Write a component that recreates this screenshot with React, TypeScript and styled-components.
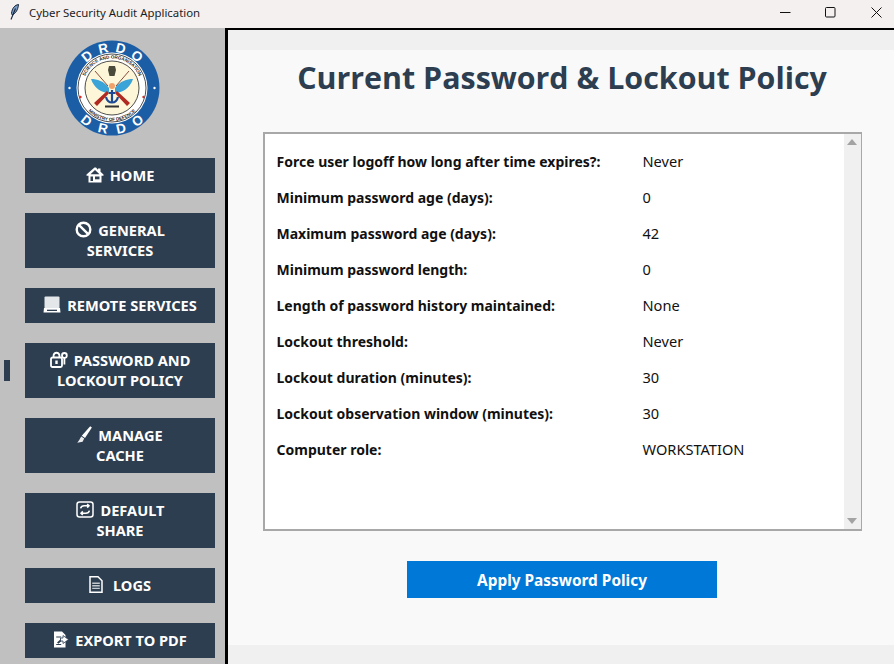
import React from "react";
import styled, { createGlobalStyle } from "styled-components";

const GlobalStyles = createGlobalStyle`
  html, body {
    margin: 0;
    padding: 0;
    height: 100%;
    background: #f0f0f0;
    font-family: "Noto Sans", "Open Sans", sans-serif;
  }
`;

const Window = styled.div`
  display: flex;
  flex-direction: column;
  width: 894px;
  height: 664px;
  overflow: hidden;
`;

const TitleBar = styled.div`
  display: flex;
  align-items: flex-start;
  flex: 0 0 28px;
  padding-left: 10px;
  background: #f4f0f0;
  color: #1c1c1c;
`;

const AppIcon = styled.div`
  display: flex;
  margin-top: 4px;
`;

const AppTitle = styled.span`
  margin: 5px 0 0 10px;
  font-size: 11.4px;
  line-height: 16px;
`;

const WindowControls = styled.div`
  display: flex;
  margin: 0 -5px 0 auto;
`;

const WindowControl = styled.div`
  display: flex;
  align-items: center;
  justify-content: center;
  width: 45.5px;
  height: 24px;
  color: #111;
`;

const Body = styled.div`
  display: flex;
  flex: 1;
  min-height: 0;
`;

const Sidebar = styled.nav`
  display: flex;
  flex-direction: column;
  flex: 0 0 225px;
  box-sizing: border-box;
  padding: 12px 10px 0 25px;
  background: #c0c0c0;
`;

const LogoWrap = styled.div`
  display: flex;
  justify-content: center;
  height: 118px;
  padding-right: 16px;
`;

const NavList = styled.div`
  display: flex;
  flex-direction: column;
  gap: 20px;
`;

const NavButton = styled.div<{ $tall?: boolean; $active?: boolean }>`
  position: relative;
  display: flex;
  flex-direction: column;
  align-items: center;
  justify-content: center;
  height: ${({ $tall }) => ($tall ? 55 : 35)}px;
  box-sizing: border-box;
  padding-bottom: 2px;
  background: #2c3e50;
  color: #fff;
  font-size: 14.6px;
  font-weight: 700;
  line-height: 20px;

  &::before {
    content: "";
    display: ${({ $active }) => ($active ? "block" : "none")};
    position: absolute;
    left: -21px;
    top: 17px;
    width: 6px;
    height: 21px;
    background: #2c3e50;
  }
`;

const NavLine = styled.span<{ $gap?: number }>`
  display: flex;
  align-items: center;
  gap: ${({ $gap }) => $gap ?? 6}px;
`;

const Divider = styled.div`
  flex: 0 0 3px;
  background: #000;
`;

const Main = styled.main`
  display: flex;
  flex-direction: column;
  flex: 1;
  border-top: 2px solid #000;
  padding: 20px 0 19px;
  background: #f0f0f0;
`;

const Content = styled.section`
  display: flex;
  flex-direction: column;
  align-items: center;
  flex: 1;
  padding-left: 2px;
  background: #f9f9f9;
`;

const Heading = styled.h1`
  margin: 6px 0 32px;
  color: #2c3e50;
  font-family: "Open Sans", sans-serif;
  font-size: 30.4px;
  font-weight: 700;
  line-height: 44px;
`;

const PolicyPanel = styled.div`
  display: flex;
  width: 599px;
  height: 399px;
  box-sizing: border-box;
  border: 2px solid #a8a8a8;
  border-right-width: 1px;
  background: #fff;
`;

const PolicyList = styled.div`
  flex: 1;
  display: flex;
  flex-direction: column;
  padding: 9px 0 0 12px;
`;

const PolicyRow = styled.div`
  display: flex;
  align-items: center;
  height: 36px;
  color: #111;
  font-size: 14.6px;
`;

const PolicyLabel = styled.span`
  flex: 0 0 366px;
  font-size: 14px;
  font-weight: 700;
`;

const Scrollbar = styled.div`
  display: flex;
  flex-direction: column;
  align-items: center;
  justify-content: space-between;
  flex: 0 0 17px;
  box-sizing: border-box;
  padding: 5px 0;
  background: #f0f0f0;
`;

const ScrollArrow = styled.div<{ $down?: boolean }>`
  width: 0;
  height: 0;
  border-left: 5px solid transparent;
  border-right: 5px solid transparent;
  ${({ $down }) =>
    $down ? "border-top: 6px solid #a3a3a3;" : "border-bottom: 6px solid #a3a3a3;"}
`;

const ApplyButton = styled.div`
  display: flex;
  align-items: center;
  justify-content: center;
  width: 310px;
  height: 37px;
  box-sizing: border-box;
  padding-top: 1px;
  margin-top: 30px;
  background: #0078d7;
  color: #fff;
  font-size: 15.4px;
  font-weight: 700;
`;

const policies = [
  ["Force user logoff how long after time expires?:", "Never"],
  ["Minimum password age (days):", "0"],
  ["Maximum password age (days):", "42"],
  ["Minimum password length:", "0"],
  ["Length of password history maintained:", "None"],
  ["Lockout threshold:", "Never"],
  ["Lockout duration (minutes):", "30"],
  ["Lockout observation window (minutes):", "30"],
  ["Computer role:", "WORKSTATION"],
];

const ringLetters = [
  { ch: "D", a: -38 },
  { ch: "R", a: -12.5 },
  { ch: "D", a: 12.5 },
  { ch: "O", a: 38 },
];

const FeatherIcon = () => (
  <svg width="9" height="16" viewBox="0 0 9 16">
    <path d="M8.500.500C5 1 2 4 1.500 9.500l.8 1.500C5.500 9.500 8 6 8.500.500Z" fill="#7d9cc4" stroke="#12233a" strokeWidth="1" />
    <path d="M5.500 4.500 1 15.500" stroke="#12233a" strokeWidth="1.100" fill="none" />
  </svg>
);

const HomeIcon = () => (
  <svg width="18" height="16" viewBox="0 0 18 16">
    <path d="M8.500.500.500 7.500v1.300h2V15.500h13V8.800h2V7.500l-3-2.700V1.500h-2.500v1.200L10 .500Z" fill="#fff" />
    <path d="M9 3 4.500 7.300h9Z" fill="#2c3e50" />
    <rect x="4.500" y="9.500" width="2.500" height="4.500" fill="#2c3e50" />
    <rect x="9" y="9.500" width="4.500" height="2.800" fill="#2c3e50" />
  </svg>
);

const BlockedIcon = () => (
  <svg width="17" height="17" viewBox="0 0 17 17" fill="none" stroke="#fff" strokeWidth="2.400">
    <circle cx="8.500" cy="8.500" r="6.800" />
    <path d="M3.800 3.800 13.200 13.200" />
  </svg>
);

const RemoteIcon = () => (
  <svg width="18" height="17" viewBox="0 0 18 17">
    <rect x="1.500" y=".500" width="15" height="12" rx="1" fill="#e4e7ea" />
    <path d="M1 12h16l.5 4.500H.5Z" fill="#fff" />
    <rect x="4" y="13.700" width="10" height="1.300" fill="#2c3e50" />
  </svg>
);

const LockIcon = () => (
  <svg width="18" height="17" viewBox="0 0 18 17" fill="none" stroke="#fff" strokeWidth="1.800">
    <rect x="1" y="6.500" width="11" height="9.500" rx="1.500" />
    <path d="M3.600 6.500V4a3 3 0 0 1 5.800 0v2.500" />
    <path d="M6.500 9.500v3.500" strokeWidth="2.400" />
    <circle cx="14.400" cy="4.400" r="2.400" />
    <path d="M14.400 7V13.500" />
  </svg>
);

const BroomIcon = () => (
  <svg width="15" height="17" viewBox="0 0 15 17">
    <path d="M13.200.300 14.900 1.400 8 12 4.800 9.800Z" fill="#fff" />
    <path d="M4.200 10.400 7.200 12.600 5.600 15.800.3 16.800 2.400 13.800Z" fill="#ececec" />
  </svg>
);

const ShareIcon = () => (
  <svg width="18" height="17" viewBox="0 0 18 17" fill="none" stroke="#fff" strokeWidth="1.500">
    <rect x="1" y="1" width="16" height="15" rx="2.500" />
    <path d="M4.600 7.400c.5-2 2-2.600 3.600-2.600h4.600M11.200 3l1.800 1.800L11.200 6.600" />
    <path d="M13.400 9.600c-.5 2-2 2.600-3.600 2.600H5.200M6.800 14 5 12.200l1.800-1.800" />
  </svg>
);

const DocIcon = () => (
  <svg width="14" height="17" viewBox="0 0 14 17">
    <path d="M1 .8h8l4 4v11.400H1Z" fill="none" stroke="#fff" strokeWidth="1.500" />
    <path d="M3.200 7.200h7.600M3.200 9.800h7.600M3.200 12.400h7.600" stroke="#c4c8cd" strokeWidth="1.400" />
  </svg>
);

const ExportIcon = () => (
  <svg width="16" height="17" viewBox="0 0 16 17">
    <path d="M1 .500h8l3.500 3.500v12.500H1Z" fill="#fff" />
    <path d="M3.200 6h5M3.200 13.500h5" stroke="#2c3e50" strokeWidth="1.200" />
    <path d="M4 11.500 8.400 7.600l1.400 1.300-4.400 3.900Z" fill="#2c3e50" />
    <path d="M10 4.500 15.600 8.600 10 12.500V10H7.500V7H10Z" fill="#fff" stroke="#2c3e50" strokeWidth=".8" />
  </svg>
);

const DrdoLogo = () => (
  <svg width="96" height="96" viewBox="0 0 96 96">
    <defs>
      <path id="inner-top" d="M18.500 48a29.500 29.500 0 0 1 59 0" />
      <path id="inner-bottom" d="M15 48a33 33 0 0 0 66 0" />
    </defs>
    <circle cx="48" cy="48" r="47.500" fill="#1c5ea6" />
    <circle cx="48" cy="48" r="35.500" fill="#fff" />
    <circle cx="48" cy="48" r="34" fill="none" stroke="#222" strokeWidth=".8" />
    <circle cx="48" cy="48" r="27" fill="#fdf6d8" stroke="#222" strokeWidth=".8" />
    <g fontFamily="Liberation Sans, sans-serif" fontWeight="700" fill="#fff" fontSize="13.500" textAnchor="middle">
      {ringLetters.map(({ ch, a }) => (
        <text key={`t${a}`} x="48" y="12" transform={`rotate(${a} 48 48)`}>{ch}</text>
      ))}
      {ringLetters.map(({ ch, a }) => (
        <text key={`b${a}`} x="48" y="94" transform={`rotate(${-a} 48 48)`}>{ch}</text>
      ))}
    </g>
    <g fontFamily="Liberation Sans, sans-serif" fontWeight="700" fill="#222" fontSize="4.600" textAnchor="middle">
      <text>
        <textPath href="#inner-top" startOffset="50%">SCIENCE AND ORGANISATION</textPath>
      </text>
      <text>
        <textPath href="#inner-bottom" startOffset="50%">MINISTRY OF DEFENCE</textPath>
      </text>
    </g>
    <circle cx="5.500" cy="48" r="1.200" fill="#fff" />
    <circle cx="90.500" cy="48" r="1.200" fill="#fff" />
    <circle cx="16.500" cy="57" r="1.200" fill="#d3322c" />
    <circle cx="79.500" cy="57" r="1.200" fill="#d3322c" />
    <path d="M27 39c6 0 13 2 18 9v5c-7 0-15-5-18-14ZM69 39c-6 0-13 2-18 9v5c7 0 15-5 18-14Z" fill="#3aa3d8" />
    <path d="M31 31 44 46M65 31 52 46" stroke="#7a3a2a" strokeWidth=".9" />
    <path d="M30 63 43 51l2 2.200L33 66ZM66 63 53 51l-2 2.200L63 66Z" fill="#b02a22" />
    <path d="M45 26h6l1 4-1.500 6h-5L44 30Z" fill="#4a4a3a" />
    <circle cx="48" cy="46" r="3" fill="#f0a26a" />
    <path d="M48 50v12M45 53h6M42 57c1 4 3.500 5.500 6 5.500s5-1.500 6-5.500" stroke="#1c4a96" strokeWidth="2.200" fill="none" />
    <rect x="41" y="65.500" width="14" height="2" fill="#333" />
  </svg>
);

const App = () => (
  <Window>
    <GlobalStyles />
    <TitleBar>
      <AppIcon><FeatherIcon /></AppIcon>
      <AppTitle>Cyber Security Audit Application</AppTitle>
      <WindowControls>
        <WindowControl>
          <svg width="11" height="11" viewBox="0 0 11 11"><path d="M0 5.500h10.500" stroke="currentColor" /></svg>
        </WindowControl>
        <WindowControl>
          <svg width="11" height="11" viewBox="0 0 11 11" fill="none"><rect x=".5" y=".5" width="9.500" height="9.500" rx="1" stroke="currentColor" /></svg>
        </WindowControl>
        <WindowControl>
          <svg width="11" height="11" viewBox="0 0 11 11"><path d="M.5.500l10 10M10.500.500l-10 10" stroke="currentColor" /></svg>
        </WindowControl>
      </WindowControls>
    </TitleBar>
    <Body>
      <Sidebar>
        <LogoWrap>
          <DrdoLogo />
        </LogoWrap>
        <NavList>
          <NavButton>
            <NavLine><HomeIcon />HOME</NavLine>
          </NavButton>
          <NavButton $tall>
            <NavLine><BlockedIcon />GENERAL</NavLine>
            <NavLine>SERVICES</NavLine>
          </NavButton>
          <NavButton>
            <NavLine><RemoteIcon />REMOTE SERVICES</NavLine>
          </NavButton>
          <NavButton $tall $active>
            <NavLine><LockIcon />PASSWORD AND</NavLine>
            <NavLine>LOCKOUT POLICY</NavLine>
          </NavButton>
          <NavButton $tall>
            <NavLine><BroomIcon />MANAGE</NavLine>
            <NavLine>CACHE</NavLine>
          </NavButton>
          <NavButton $tall>
            <NavLine $gap={7}><ShareIcon />DEFAULT</NavLine>
            <NavLine>SHARE</NavLine>
          </NavButton>
          <NavButton>
            <NavLine $gap={10}><DocIcon />LOGS</NavLine>
          </NavButton>
          <NavButton>
            <NavLine><ExportIcon />EXPORT TO PDF</NavLine>
          </NavButton>
        </NavList>
      </Sidebar>
      <Divider />
      <Main>
        <Content>
          <Heading>Current Password &amp; Lockout Policy</Heading>
          <PolicyPanel>
            <PolicyList>
              {policies.map(([label, value]) => (
                <PolicyRow key={label}>
                  <PolicyLabel>{label}</PolicyLabel>
                  <span>{value}</span>
                </PolicyRow>
              ))}
            </PolicyList>
            <Scrollbar>
              <ScrollArrow />
              <ScrollArrow $down />
            </Scrollbar>
          </PolicyPanel>
          <ApplyButton>Apply Password Policy</ApplyButton>
        </Content>
      </Main>
    </Body>
  </Window>
);

export default App;
